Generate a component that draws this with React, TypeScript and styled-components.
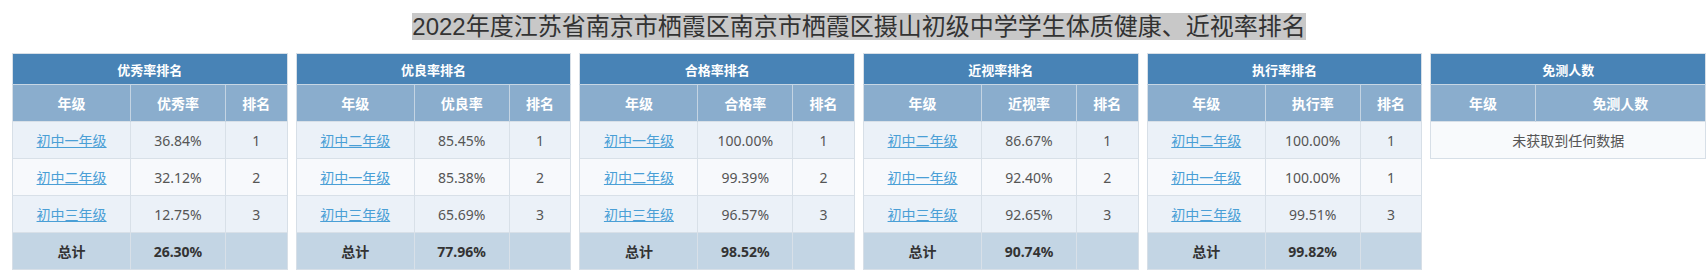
import React from 'react';
import styled, { createGlobalStyle } from 'styled-components';

const GlobalStyle = createGlobalStyle`
  html, body {
    margin: 0;
    padding: 0;
    background: #ffffff;
  }
  body {
    font-family: "Noto Sans", "Noto Sans CJK SC", sans-serif;
  }
`;

const Page = styled.div`
  padding: 13px 2px 0 12px;
`;

const TitleBar = styled.div`
  text-align: center;
  height: 40px;
`;

const TitleText = styled.span`
  font-family: "Liberation Sans", "Noto Sans CJK SC", sans-serif;
  font-size: 24px;
  line-height: 27px;
  color: #333333;
  background: #c8c8c8;
  display: inline-block;
  padding: 0;
`;

const Board = styled.div`
  display: flex;
  gap: 8px;
  align-items: flex-start;
`;

const RankTable = styled.table`
  flex: 1 1 0;
  min-width: 0;
  border-collapse: collapse;
  table-layout: fixed;
  font-size: 14px;
  color: #555555;
  text-align: center;
  border: 1px solid #d7dfe7;
`;

const GroupHead = styled.th`
  height: 30px;
  padding: 0;
  background: #4883b6;
  color: #ffffff;
  font-size: 13px;
  font-weight: bold;
  border-bottom: 1px solid #c7d6e4;
`;

const SubHead = styled.th`
  height: 36px;
  padding: 0;
  background: #8aadcd;
  color: #ffffff;
  font-size: 14px;
  font-weight: bold;
  border-left: 1px solid #c4d4e3;
  &:first-child {
    border-left: none;
  }
`;

const Row = styled.tr<{ $alt?: boolean }>`
  background: ${(p) => (p.$alt ? '#f7f9fc' : '#ebf1f8')};
`;

const TotalRow = styled.tr`
  background: #c3d5e4;
  color: #333333;
  font-weight: bold;
`;

const Cell = styled.td`
  height: 36px;
  padding: 0;
  border-top: 1px solid #d8e0e8;
  border-left: 1px solid #d8e0e8;
  &:first-child {
    border-left: none;
  }
`;

const EmptyCell = styled(Cell)`
  background: #f8fafc;
  color: #555555;
`;

const GradeLink = styled.a`
  color: #4a9fd6;
  text-decoration: underline;
  cursor: pointer;
`;

type Item = { grade: string; value: string; rank: number };

type Block = { title: string; label: string; rows: Item[]; total: string };

const blocks: Block[] = [
  {
    title: '优秀率排名',
    label: '优秀率',
    rows: [
      { grade: '初中一年级', value: '36.84%', rank: 1 },
      { grade: '初中二年级', value: '32.12%', rank: 2 },
      { grade: '初中三年级', value: '12.75%', rank: 3 },
    ],
    total: '26.30%',
  },
  {
    title: '优良率排名',
    label: '优良率',
    rows: [
      { grade: '初中二年级', value: '85.45%', rank: 1 },
      { grade: '初中一年级', value: '85.38%', rank: 2 },
      { grade: '初中三年级', value: '65.69%', rank: 3 },
    ],
    total: '77.96%',
  },
  {
    title: '合格率排名',
    label: '合格率',
    rows: [
      { grade: '初中一年级', value: '100.00%', rank: 1 },
      { grade: '初中二年级', value: '99.39%', rank: 2 },
      { grade: '初中三年级', value: '96.57%', rank: 3 },
    ],
    total: '98.52%',
  },
  {
    title: '近视率排名',
    label: '近视率',
    rows: [
      { grade: '初中二年级', value: '86.67%', rank: 1 },
      { grade: '初中一年级', value: '92.40%', rank: 2 },
      { grade: '初中三年级', value: '92.65%', rank: 3 },
    ],
    total: '90.74%',
  },
  {
    title: '执行率排名',
    label: '执行率',
    rows: [
      { grade: '初中二年级', value: '100.00%', rank: 1 },
      { grade: '初中一年级', value: '100.00%', rank: 1 },
      { grade: '初中三年级', value: '99.51%', rank: 3 },
    ],
    total: '99.82%',
  },
];

const RankBlock: React.FC<{ block: Block }> = ({ block }) => (
  <RankTable>
    <colgroup>
      <col style={{ width: '43%' }} />
      <col style={{ width: '34.5%' }} />
      <col style={{ width: '22.5%' }} />
    </colgroup>
    <thead>
      <tr>
        <GroupHead colSpan={3}>{block.title}</GroupHead>
      </tr>
      <tr>
        <SubHead>年级</SubHead>
        <SubHead>{block.label}</SubHead>
        <SubHead>排名</SubHead>
      </tr>
    </thead>
    <tbody>
      {block.rows.map((r, i) => (
        <Row key={r.grade} $alt={i % 2 === 1}>
          <Cell>
            <GradeLink>{r.grade}</GradeLink>
          </Cell>
          <Cell>{r.value}</Cell>
          <Cell>{r.rank}</Cell>
        </Row>
      ))}
      <TotalRow>
        <Cell>总计</Cell>
        <Cell>{block.total}</Cell>
        <Cell />
      </TotalRow>
    </tbody>
  </RankTable>
);

const ExemptBlock: React.FC = () => (
  <RankTable>
    <colgroup>
      <col style={{ width: '38%' }} />
      <col style={{ width: '62%' }} />
    </colgroup>
    <thead>
      <tr>
        <GroupHead colSpan={2}>免测人数</GroupHead>
      </tr>
      <tr>
        <SubHead>年级</SubHead>
        <SubHead>免测人数</SubHead>
      </tr>
    </thead>
    <tbody>
      <tr>
        <EmptyCell colSpan={2}>未获取到任何数据</EmptyCell>
      </tr>
    </tbody>
  </RankTable>
);

const App: React.FC = () => {
  return (
    <Page>
      <GlobalStyle />
      <TitleBar>
        <TitleText>2022年度江苏省南京市栖霞区南京市栖霞区摄山初级中学学生体质健康、近视率排名</TitleText>
      </TitleBar>
      <Board>
        {blocks.map((b) => (
          <RankBlock key={b.title} block={b} />
        ))}
        <ExemptBlock />
      </Board>
    </Page>
  );
};

export default App;
